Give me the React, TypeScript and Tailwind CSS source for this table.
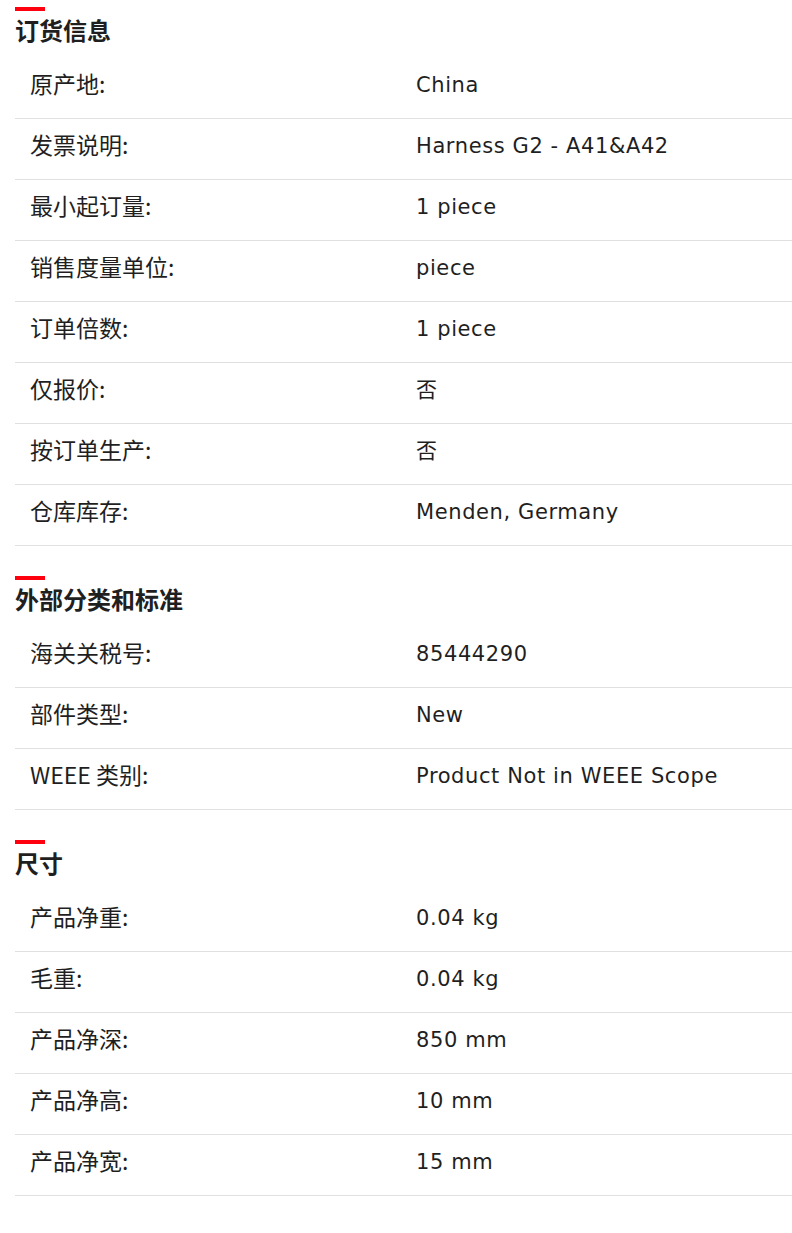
const sections = [
  {
    title: '订货信息',
    rows: [
      ['原产地:', 'China'],
      ['发票说明:', 'Harness G2 - A41&A42'],
      ['最小起订量:', '1 piece'],
      ['销售度量单位:', 'piece'],
      ['订单倍数:', '1 piece'],
      ['仅报价:', '否'],
      ['按订单生产:', '否'],
      ['仓库库存:', 'Menden, Germany'],
    ],
  },
  {
    title: '外部分类和标准',
    rows: [
      ['海关关税号:', '85444290'],
      ['部件类型:', 'New'],
      ['WEEE 类别:', 'Product Not in WEEE Scope'],
    ],
  },
  {
    title: '尺寸',
    rows: [
      ['产品净重:', '0.04 kg'],
      ['毛重:', '0.04 kg'],
      ['产品净深:', '850 mm'],
      ['产品净高:', '10 mm'],
      ['产品净宽:', '15 mm'],
    ],
  },
]

export default function App() {
  return (
    <div className="min-h-[1233px] bg-white pl-[15px] pt-[7px] text-[#1f1f1f] font-['DejaVu_Sans','Noto_Sans_CJK_SC',sans-serif]">
      {sections.map((s, i) => (
        <section key={s.title} className={i > 0 ? 'mt-[30px]' : ''}>
          <div className="h-1 w-[30px] bg-[#ff000f]" />
          {/* section heading */}
          <h2 className="h-[47px] pt-[4px] text-[24px] leading-[30px] font-bold font-['Noto_Sans_CJK_SC',sans-serif]">{s.title}</h2>
          <div>
            {s.rows.map(([label, value]) => (
              <div key={label} className="flex h-[61px] items-center border-b border-[#e0e0e0] pb-[4px]">
                <div className="w-[401px] pl-[15px] pb-[7px] text-[23px] leading-[30px] font-['Noto_Sans_CJK_SC',sans-serif]">
                  {label}
                </div>
                <div className="pb-[2px] text-[21px] leading-[30px] tracking-[0.6px]">{value}</div>
              </div>
            ))}
          </div>
        </section>
      ))}
    </div>
  )
}
